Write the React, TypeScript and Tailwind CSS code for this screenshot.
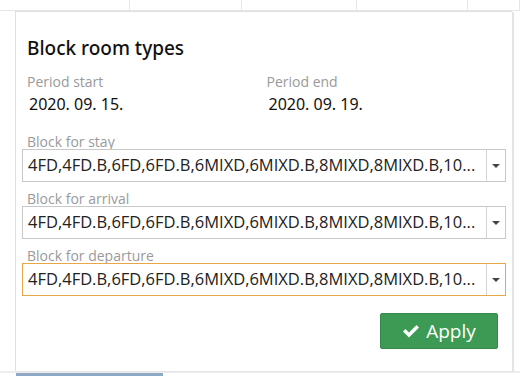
import React from "react";

const VALUE = "4FD,4FD.B,6FD,6FD.B,6MIXD,6MIXD.B,8MIXD,8MIXD.B,10...";

function Select({ label, focused }: { label: string; focused?: boolean }) {
  return (
    <div className="flex flex-col">
      <div className="text-[14px] leading-[16px] text-[#9a9a9a] pl-[5px]">{label}</div>
      <div
        className={
          "mt-[-1px] h-[33px] flex items-stretch border bg-white " +
          (focused ? "border-[#e8a84a]" : "border-[#c8c8c8]")
        }
      >
        <div className="flex-1 min-w-0 flex items-center pl-[5px] text-[16.5px] text-[#222] whitespace-nowrap">
          <span>{VALUE}</span>
        </div>
        <div className="w-[19px] border-l border-[#d4d4d4] flex items-center justify-center">
          <svg width="8" height="4" viewBox="0 0 8 4">
            <path d="M0 0 H8 L4 4 Z" fill="#444" />
          </svg>
        </div>
      </div>
    </div>
  );
}

export default function App() {
  const cols = [130, 112, 115, 111, 52];
  return (
    <div
      className="relative w-[520px] h-[376px] overflow-hidden bg-white"
      style={{ fontFamily: '"Open Sans", "Noto Sans", sans-serif' }}
    >
      {/* background calendar grid */}
      <div className="flex h-[11px] border-b border-[#e6e6e6]">
        {cols.map((w, i) => (
          <div key={i} className="h-full border-r border-[#e6e6e6]" style={{ width: w }} />
        ))}
      </div>
      <div className="absolute left-[16px] top-[373px] w-[147px] h-[3px] bg-[#8fa9c4]" />
      <div className="absolute left-0 right-0 top-[371px] h-[2px] bg-[#eeeeee]" />

      {/* popup panel */}
      <div className="absolute left-[15px] top-[11px] w-[497px] h-[360px] bg-white border-l border-t border-[#e0e0e0] shadow-[2px_1px_0_#e4e4e4] px-[6px] pt-[24px]">
        <div
          className="pl-[5px] text-[19px] leading-[24px] text-[#111] font-medium"
          style={{ fontFamily: '"Noto Sans", "Open Sans", sans-serif' }}
        >
          Block room types
        </div>
        <div className="mt-[13px] grid grid-cols-2 pl-[5px]">
          <div>
            <div className="text-[14px] leading-[18px] text-[#9a9a9a]">Period start</div>
            <div
              className="mt-[2px] pl-[2px] text-[16px] leading-[22px] text-[#111]"
              style={{ fontFamily: '"Noto Sans", sans-serif' }}
            >
              2020. 09. 15.
            </div>
          </div>
          <div>
            <div className="text-[14px] leading-[18px] text-[#9a9a9a]">Period end</div>
            <div
              className="mt-[2px] pl-[2px] text-[16px] leading-[22px] text-[#111]"
              style={{ fontFamily: '"Noto Sans", sans-serif' }}
            >
              2020. 09. 19.
            </div>
          </div>
        </div>
        <div className="mt-[19px] flex flex-col gap-[9px]">
          <Select label="Block for stay" />
          <Select label="Block for arrival" />
          <Select label="Block for departure" focused />
        </div>
        <div className="mt-[17px] flex justify-end pr-[8px]">
          <button className="w-[118px] h-[36px] rounded-[2px] bg-[#3d9a54] border border-[#36894a] text-white text-[19px] flex items-center justify-center gap-[6px]">
            <svg width="18" height="14" viewBox="0 0 18 14">
              <path d="M1 7.5 L3.5 5 L7 8.5 L14.5 1 L17 3.5 L7 13.5 Z" fill="white" />
            </svg>
            <span>Apply</span>
          </button>
        </div>
      </div>
    </div>
  );
}
